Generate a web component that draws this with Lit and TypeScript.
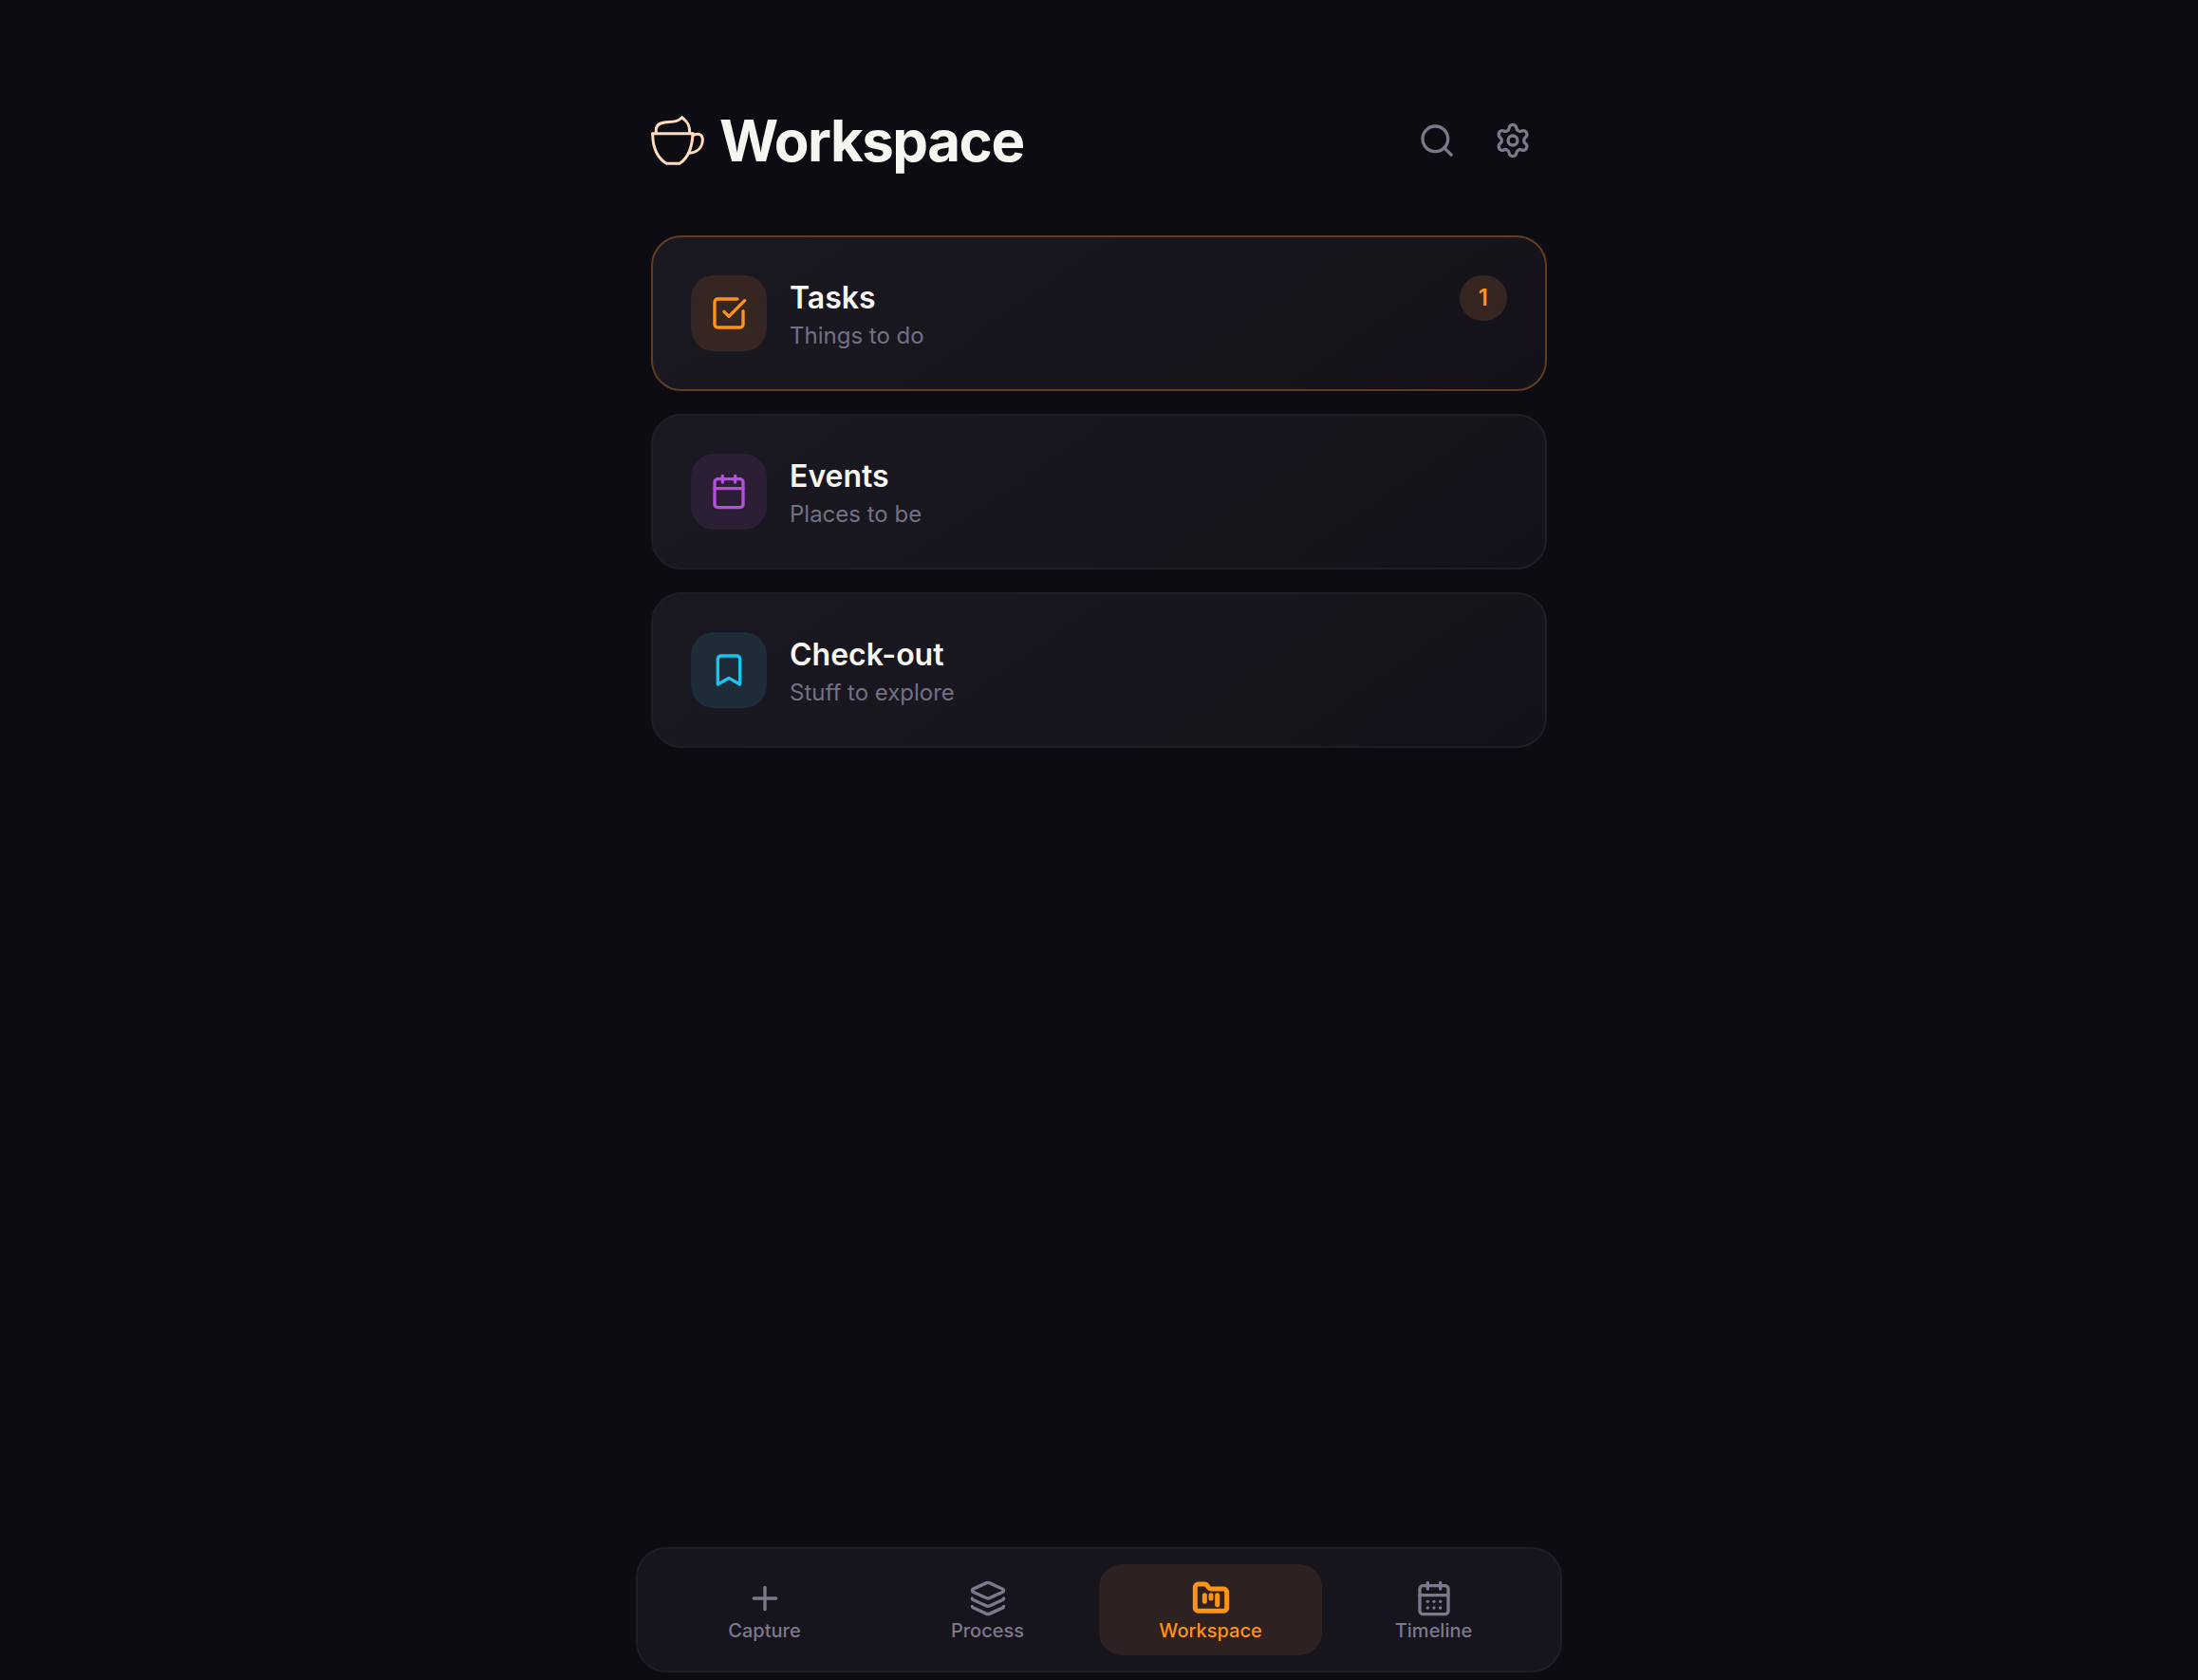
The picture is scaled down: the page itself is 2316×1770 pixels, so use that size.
import { LitElement, html, css, svg } from "lit";
import { customElement, state } from "lit/decorators.js";

const icons = {
  search: svg`<circle cx="11" cy="11" r="8"/><path d="m21 21-4.34-4.34"/>`,
  settings: svg`<path d="M9.671 4.136a2.34 2.34 0 0 1 4.659 0 2.34 2.34 0 0 0 3.319 1.915 2.34 2.34 0 0 1 2.33 4.033 2.34 2.34 0 0 0 0 3.831 2.34 2.34 0 0 1-2.33 4.033 2.34 2.34 0 0 0-3.319 1.915 2.34 2.34 0 0 1-4.659 0 2.34 2.34 0 0 0-3.32-1.915 2.34 2.34 0 0 1-2.33-4.033 2.34 2.34 0 0 0 0-3.831A2.34 2.34 0 0 1 6.35 6.051a2.34 2.34 0 0 0 3.319-1.915"/><circle cx="12" cy="12" r="3"/>`,
  tasks: svg`<path d="M21 10.656V19a2 2 0 0 1-2 2H5a2 2 0 0 1-2-2V5a2 2 0 0 1 2-2h12.344"/><path d="m9 11 3 3L22 4"/>`,
  calendar: svg`<path d="M8 2v4"/><path d="M16 2v4"/><rect width="18" height="18" x="3" y="4" rx="2"/><path d="M3 10h18"/>`,
  bookmark: svg`<path d="m19 21-7-4-7 4V5a2 2 0 0 1 2-2h10a2 2 0 0 1 2 2v16z"/>`,
  plus: svg`<path d="M5 12h14"/><path d="M12 5v14"/>`,
  layers: svg`<path d="M12.83 2.18a2 2 0 0 0-1.66 0L2.6 6.08a1 1 0 0 0 0 1.83l8.58 3.91a2 2 0 0 0 1.66 0l8.58-3.9a1 1 0 0 0 0-1.83z"/><path d="M2 12a1 1 0 0 0 .58.91l8.6 3.91a2 2 0 0 0 1.65 0l8.58-3.9A1 1 0 0 0 22 12"/><path d="M2 17a1 1 0 0 0 .58.91l8.6 3.91a2 2 0 0 0 1.65 0l8.58-3.9A1 1 0 0 0 22 17"/>`,
  folder: svg`<path d="M4 20h16a2 2 0 0 0 2-2V8a2 2 0 0 0-2-2h-7.93a2 2 0 0 1-1.66-.9l-.82-1.2A2 2 0 0 0 7.93 3H4a2 2 0 0 0-2 2v13c0 1.1.9 2 2 2Z"/><path d="M8 10v4"/><path d="M12 10v2"/><path d="M16 10v6"/>`,
  days: svg`<path d="M8 2v4"/><path d="M16 2v4"/><rect width="18" height="18" x="3" y="4" rx="2"/><path d="M3 10h18"/><path d="M8 14h.01"/><path d="M12 14h.01"/><path d="M16 14h.01"/><path d="M8 18h.01"/><path d="M12 18h.01"/><path d="M16 18h.01"/>`,
};

type IconName = keyof typeof icons;

const icon = (name: IconName) =>
  html`<svg class="icon" viewBox="0 0 24 24" aria-hidden="true">${icons[name]}</svg>`;

const cards: { icon: IconName; tone: string; title: string; text: string; count?: number }[] = [
  { icon: "tasks", tone: "orange", title: "Tasks", text: "Things to do", count: 1 },
  { icon: "calendar", tone: "purple", title: "Events", text: "Places to be" },
  { icon: "bookmark", tone: "cyan", title: "Check-out", text: "Stuff to explore" },
];

const tabs: { icon: IconName; label: string }[] = [
  { icon: "plus", label: "Capture" },
  { icon: "layers", label: "Process" },
  { icon: "folder", label: "Workspace" },
  { icon: "days", label: "Timeline" },
];

@customElement("app-root")
export class AppRoot extends LitElement {
  @state() private active = "Workspace";

  static styles = css`
    :host {
      display: block;
      font-family: Inter, "Liberation Sans", sans-serif;
      color: #f7f5ef;
      background: #0d0c12;
    }
    * { box-sizing: border-box; }
    button {
      font: inherit;
      color: inherit;
      border: 0;
      margin: 0;
      background: none;
      cursor: pointer;
    }
    .page {
      min-height: 100vh;
      display: flex;
      flex-direction: column;
      align-items: center;
      padding: 96px 16px 8px;
    }
    main {
      flex: 1;
      width: 100%;
      max-width: 944px;
    }
    header {
      display: flex;
      align-items: center;
      justify-content: space-between;
      height: 104px;
      margin-bottom: 48px;
    }
    .brand {
      display: flex;
      align-items: center;
      gap: 16px;
    }
    .cup {
      width: 56px;
      height: 56px;
      fill: none;
      stroke: #ffdcbd;
      stroke-width: 9;
      stroke-linecap: round;
      stroke-linejoin: round;
    }
    h1 {
      margin: 0;
      font-size: 60px;
      line-height: 72px;
      font-weight: 700;
      letter-spacing: -0.025em;
    }
    .actions {
      display: flex;
      gap: 8px;
      color: #7d788c;
    }
    .action {
      display: grid;
      place-items: center;
      width: 72px;
      height: 72px;
      padding: 0;
      border-radius: 24px;
    }
    .icon {
      display: block;
      width: 40px;
      height: 40px;
      fill: none;
      stroke: currentColor;
      stroke-width: 2;
      stroke-linecap: round;
      stroke-linejoin: round;
    }
    .cards {
      display: flex;
      flex-direction: column;
      gap: 24px;
    }
    .card {
      display: flex;
      align-items: flex-start;
      gap: 24px;
      width: 100%;
      padding: 40px;
      text-align: left;
      border: 2px solid #1f1e25;
      border-radius: 32px;
      background: linear-gradient(145deg, #1a1922 0%, #17151e 60%, #161519 75%, #15121c 85%, #13111a 100%) border-box;
    }
    .card.filled { border-color: #623d22; }
    .tile {
      display: grid;
      place-items: center;
      flex: none;
      width: 80px;
      height: 80px;
      border-radius: 24px;
    }
    .orange { color: #ff9318; background: #352622; }
    .purple { color: #b450e0; background: #2c1e35; }
    .cyan { color: #18c5ec; background: #1e2b38; }
    .body {
      flex: 1;
      min-width: 0;
      display: flex;
      flex-direction: column;
    }
    .title {
      font-size: 32px;
      line-height: 48px;
      font-weight: 600;
    }
    .text {
      font-size: 24px;
      line-height: 32px;
      color: #757084;
    }
    .badge {
      padding: 8px 20px;
      border-radius: 24px;
      font-size: 24px;
      line-height: 32px;
      font-weight: 600;
    }
    nav {
      display: flex;
      width: 100%;
      max-width: 976px;
      padding: 16px;
      border: 2px solid #1f1e25;
      border-radius: 32px;
      background: #16141d;
    }
    .tab {
      flex: 1;
      display: flex;
      flex-direction: column;
      align-items: center;
      gap: 4px;
      padding: 16px 8px;
      border-radius: 24px;
      color: #7d788c;
      font-size: 20px;
      line-height: 20px;
      font-weight: 500;
    }
    .tab[aria-current="page"] {
      color: #ff9318;
      background: #2e2121;
    }
    .tab[aria-current="page"] .icon { stroke-width: 3; }
  `;

  render() {
    return html`
      <div class="page">
        <main>
          <header>
            <div class="brand">
              <svg class="cup" viewBox="48 60 168 168" aria-hidden="true">
                <path d="M53 122H181"/>
                <path d="M53 122C53 170 70 200 97 217H138C165 200 178 168 180 122"/>
                <path d="M181 128C194 121 212 122 211 144C209 170 190 182 169 184"/>
                <path d="M64 117C62 98 74 89 90 87C112 84 130 88 146 71C153 79 171 86 170 117"/>
              </svg>
              <h1>Workspace</h1>
            </div>
            <div class="actions">
              <button class="action" aria-label="Search">${icon("search")}</button>
              <button class="action" aria-label="Settings">${icon("settings")}</button>
            </div>
          </header>
          <div class="cards">
            ${cards.map(
              (c) => html`
                <button class="card ${c.count ? "filled" : ""}">
                  <span class="tile ${c.tone}">${icon(c.icon)}</span>
                  <span class="body">
                    <span class="title">${c.title}</span>
                    <span class="text">${c.text}</span>
                  </span>
                  ${c.count ? html`<span class="badge ${c.tone}">${c.count}</span>` : ""}
                </button>
              `
            )}
          </div>
        </main>
        <nav aria-label="Main">
          ${tabs.map(
            (t) => html`
              <button
                class="tab"
                aria-current=${this.active === t.label ? "page" : "false"}
                @click=${() => (this.active = t.label)}
              >
                ${icon(t.icon)}
                <span>${t.label}</span>
              </button>
            `
          )}
        </nav>
      </div>
    `;
  }
}
